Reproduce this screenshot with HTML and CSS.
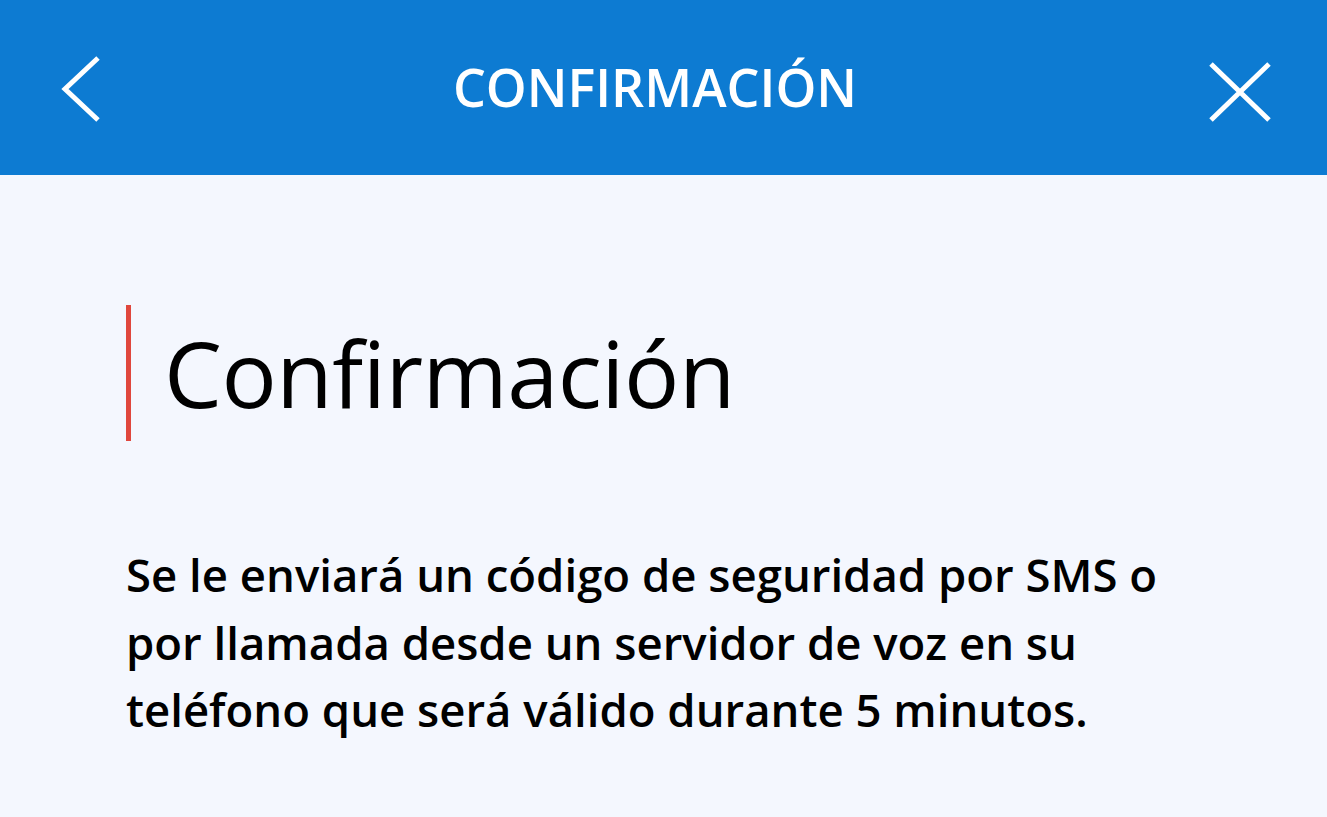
FILE: index.html
```html
<!DOCTYPE html>
<html lang="es">
<head>
<meta charset="utf-8">
<title>Confirmación</title>
<link rel="stylesheet" href="styles.css">
</head>
<body>
<header class="topbar">
  <button class="icon-btn back" aria-label="Volver">
    <svg width="40" height="68" viewBox="0 0 40 68"><polyline points="37,2 4,33 37,64" fill="none" stroke="#fff" stroke-width="5" stroke-linecap="butt"/></svg>
  </button>
  <h1 class="topbar-title">CONFIRMACIÓN</h1>
  <button class="icon-btn close" aria-label="Cerrar">
    <svg width="62" height="60" viewBox="0 0 62 60"><path d="M2 2 L60 58 M60 2 L2 58" fill="none" stroke="#fff" stroke-width="5"/></svg>
  </button>
</header>
<main class="content">
  <h2 class="page-title">Confirmación</h2>
  <p class="lead">Se le enviará un código de seguridad por SMS o por llamada desde un servidor de voz en su teléfono que será válido durante 5 minutos.</p>
</main>
</body>
</html>
```
FILE: styles.css
```css
html, body {
  margin: 0;
  padding: 0;
}
body {
  background: #f4f7fe;
  font-family: "Open Sans", "Noto Sans", sans-serif;
  color: #000;
}
.topbar {
  height: 175px;
  background: #0d7bd2;
  display: flex;
  align-items: center;
  justify-content: space-between;
  padding: 0 56px 0 61px;
  box-sizing: border-box;
}
.icon-btn {
  background: none;
  border: 0;
  padding: 0;
  display: flex;
  cursor: pointer;
}
.back { margin-top: 4px; }
.close { margin-top: 8px; }
.topbar-title {
  margin: 0;
  color: #fff;
  font-size: 52px;
  font-weight: 600;
  letter-spacing: 0;
  margin-top: -3px;
}
.content {
  padding: 130px 120px 0 126px;
}
.page-title {
  margin: 0;
  border-left: 5px solid #e0473d;
  padding-left: 33px;
  font-size: 92px;
  font-weight: 400;
  letter-spacing: -0.5px;
  line-height: 136px;
  height: 136px;
}
.lead {
  margin: 100px 0 0 0;
  font-size: 45.5px;
  font-weight: 600;
  line-height: 67.5px;
  max-width: 1080px;
}
```
